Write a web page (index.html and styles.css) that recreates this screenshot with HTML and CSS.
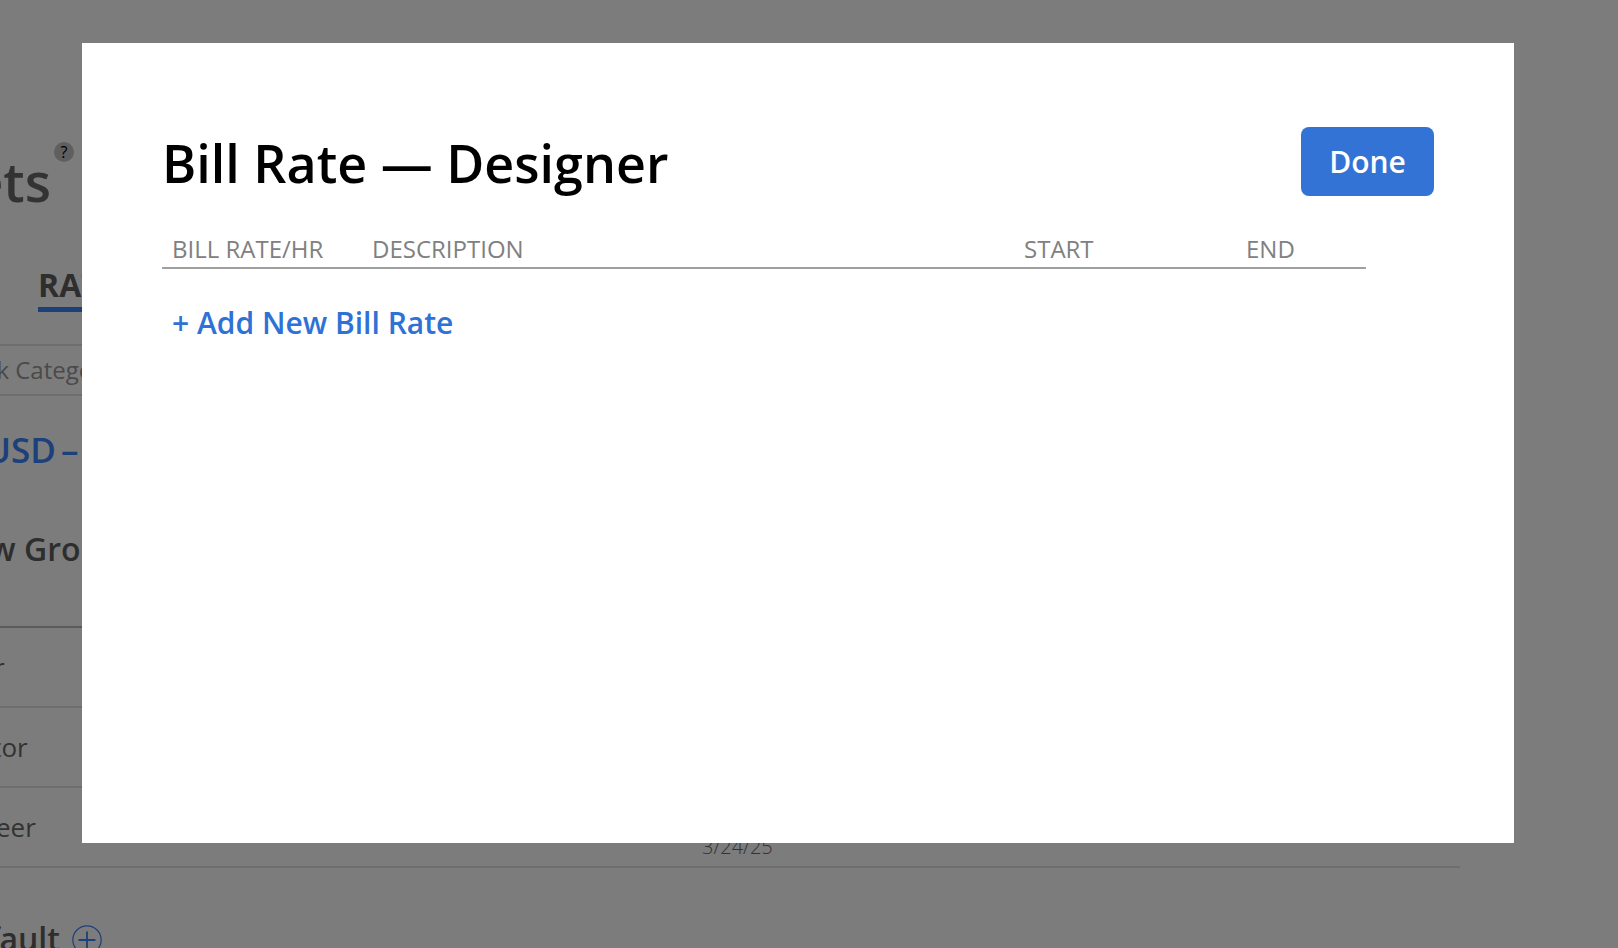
FILE: index.html
```html
<!DOCTYPE html>
<html lang="en">
<head>
  <meta charset="UTF-8">
  <title>Bill Rate — Designer</title>
  <link rel="stylesheet" href="styles.css">
</head>
<body>

<div class="page">
  <div class="page-title">
    <h1>Budgets</h1>
    <span class="help">?</span>
  </div>

  <div class="tabs">
    <span class="tab">RATES</span>
  </div>

  <div class="filter">Work Category</div>

  <div class="currency">USD – US Dollar</div>

  <div class="group-name">New Group</div>

  <div class="rows">
    <div class="row">Writer</div>
    <div class="row">Director</div>
    <div class="row">
      <span>Engineer</span>
      <span class="row-date">3/24/25</span>
      <span class="row-type">Hourly</span>
    </div>
  </div>

  <div class="default-title">
    <span>Default</span>
    <svg class="add-icon" viewBox="0 0 30 30">
      <circle cx="15" cy="15" r="14.2" fill="none" stroke="#3a84f8" stroke-width="1.2"/>
      <path d="M15 6.5v17M6.5 15h17" fill="none" stroke="#3a84f8" stroke-width="1.8"/>
    </svg>
  </div>
</div>

<div class="overlay">
  <div class="modal">
    <div class="modal-head">
      <h2>Bill Rate — Designer</h2>
      <button class="done">Done</button>
    </div>

    <div class="rate-head">
      <span>BILL RATE/HR</span>
      <span>DESCRIPTION</span>
      <span>START</span>
      <span>END</span>
    </div>

    <a class="add-rate" href="#">+ Add New Bill Rate</a>
  </div>
</div>

</body>
</html>
```

FILE: styles.css
```css
body {
  font-family: "Open Sans", Arial, sans-serif;
  background: #fff;
  margin: 0;
  height: 948px;
  overflow: hidden;
}

/* page behind the dialog, scrolled sideways so its left edge is cut off */
.page {
  width: 1580px;
  height: 948px;
  margin-left: -120px;
  padding-top: 135px;
  box-sizing: border-box;
  white-space: nowrap;
}

.page-title {
  display: flex;
  height: 128px;
}

.page-title h1 {
  display: flex;
  justify-content: flex-end;
  margin: 0;
  width: 171px;
  font-size: 54px;
  line-height: 92px;
  font-weight: 600;
  color: #6a6a6a;
}

.help {
  flex: none;
  width: 20px;
  height: 20px;
  margin: 7px 0 0 3px;
  border-radius: 50%;
  background: #c4c4c4;
  color: #000;
  font-size: 16px;
  line-height: 20px;
  text-align: center;
}

.tabs {
  height: 81px;
  padding-left: 158px;
}

.tab {
  display: inline-block;
  font-size: 32px;
  line-height: 44px;
  font-weight: 700;
  color: #5f5f5f;
  border-bottom: 5px solid #3a84f8;
}

.filter {
  height: 48px;
  border-top: 2px solid #e3e3e3;
  border-bottom: 2px solid #e3e3e3;
  padding-left: 70px;
  font-size: 24px;
  line-height: 48px;
  color: #999;
}

.currency {
  margin-top: 29px;
  padding-left: 105px;
  font-size: 35px;
  line-height: 50px;
  font-weight: 600;
  word-spacing: -4px;
  color: #3a84f8;
}

.group-name {
  margin-top: 52px;
  padding-left: 66px;
  font-size: 32px;
  line-height: 44px;
  font-weight: 600;
  color: #5f5f5f;
}

.rows {
  margin-top: 55px;
  border-top: 2px solid #bbb;
}

.row {
  display: grid;
  grid-template-columns: 773px 174px 1fr;
  height: 78px;
  padding-left: 49px;
  border-bottom: 2px solid #e3e3e3;
  font-size: 26px;
  line-height: 78px;
  color: #6a6a6a;
}

.row-date {
  align-self: end;
  margin-bottom: 5px;
  font-size: 20px;
  line-height: 28px;
  font-weight: 300;
}

.row-type {
  align-self: end;
  margin-bottom: 21px;
  font-size: 20px;
  line-height: 28px;
}

.default-title {
  display: flex;
  align-items: flex-start;
  margin-top: 49px;
  padding-left: 66px;
  font-size: 32px;
  line-height: 44px;
  font-weight: 600;
  color: #5f5f5f;
}

.add-icon {
  width: 30px;
  height: 30px;
  margin: 8px 0 0 12px;
}

.overlay {
  position: fixed;
  top: 0;
  left: 0;
  right: 0;
  bottom: 0;
  display: flex;
  padding: 43px 104px 105px 82px;
  background: rgba(0,0,0,0.515);
}

.modal {
  flex: 1;
  padding: 84px 80px 0 82px;
  background: #fff;
}

.modal-head {
  display: flex;
  justify-content: space-between;
  align-items: flex-start;
}

.modal-head h2 {
  margin: 0 0 0 -2px;
  font-size: 52px;
  line-height: 71px;
  font-weight: 600;
  color: #000;
}

.done {
  width: 133px;
  height: 69px;
  padding: 0;
  border: none;
  border-radius: 8px;
  background: #3373d6;
  color: #fff;
  font-family: inherit;
  font-size: 30px;
  font-weight: 600;
}

.rate-head {
  display: grid;
  grid-template-columns: 200px 652px 222px 1fr;
  width: 1194px;
  margin: 35px 0 0 -2px;
  padding: 0 0 2px 10px;
  border-bottom: 2px solid #a0a0a0;
  font-size: 24px;
  line-height: 32px;
  color: #808080;
}

.add-rate {
  display: block;
  margin: 34px 0 0 8px;
  font-size: 30px;
  line-height: 40px;
  font-weight: 600;
  color: #2f72d6;
  text-decoration: none;
}
```
